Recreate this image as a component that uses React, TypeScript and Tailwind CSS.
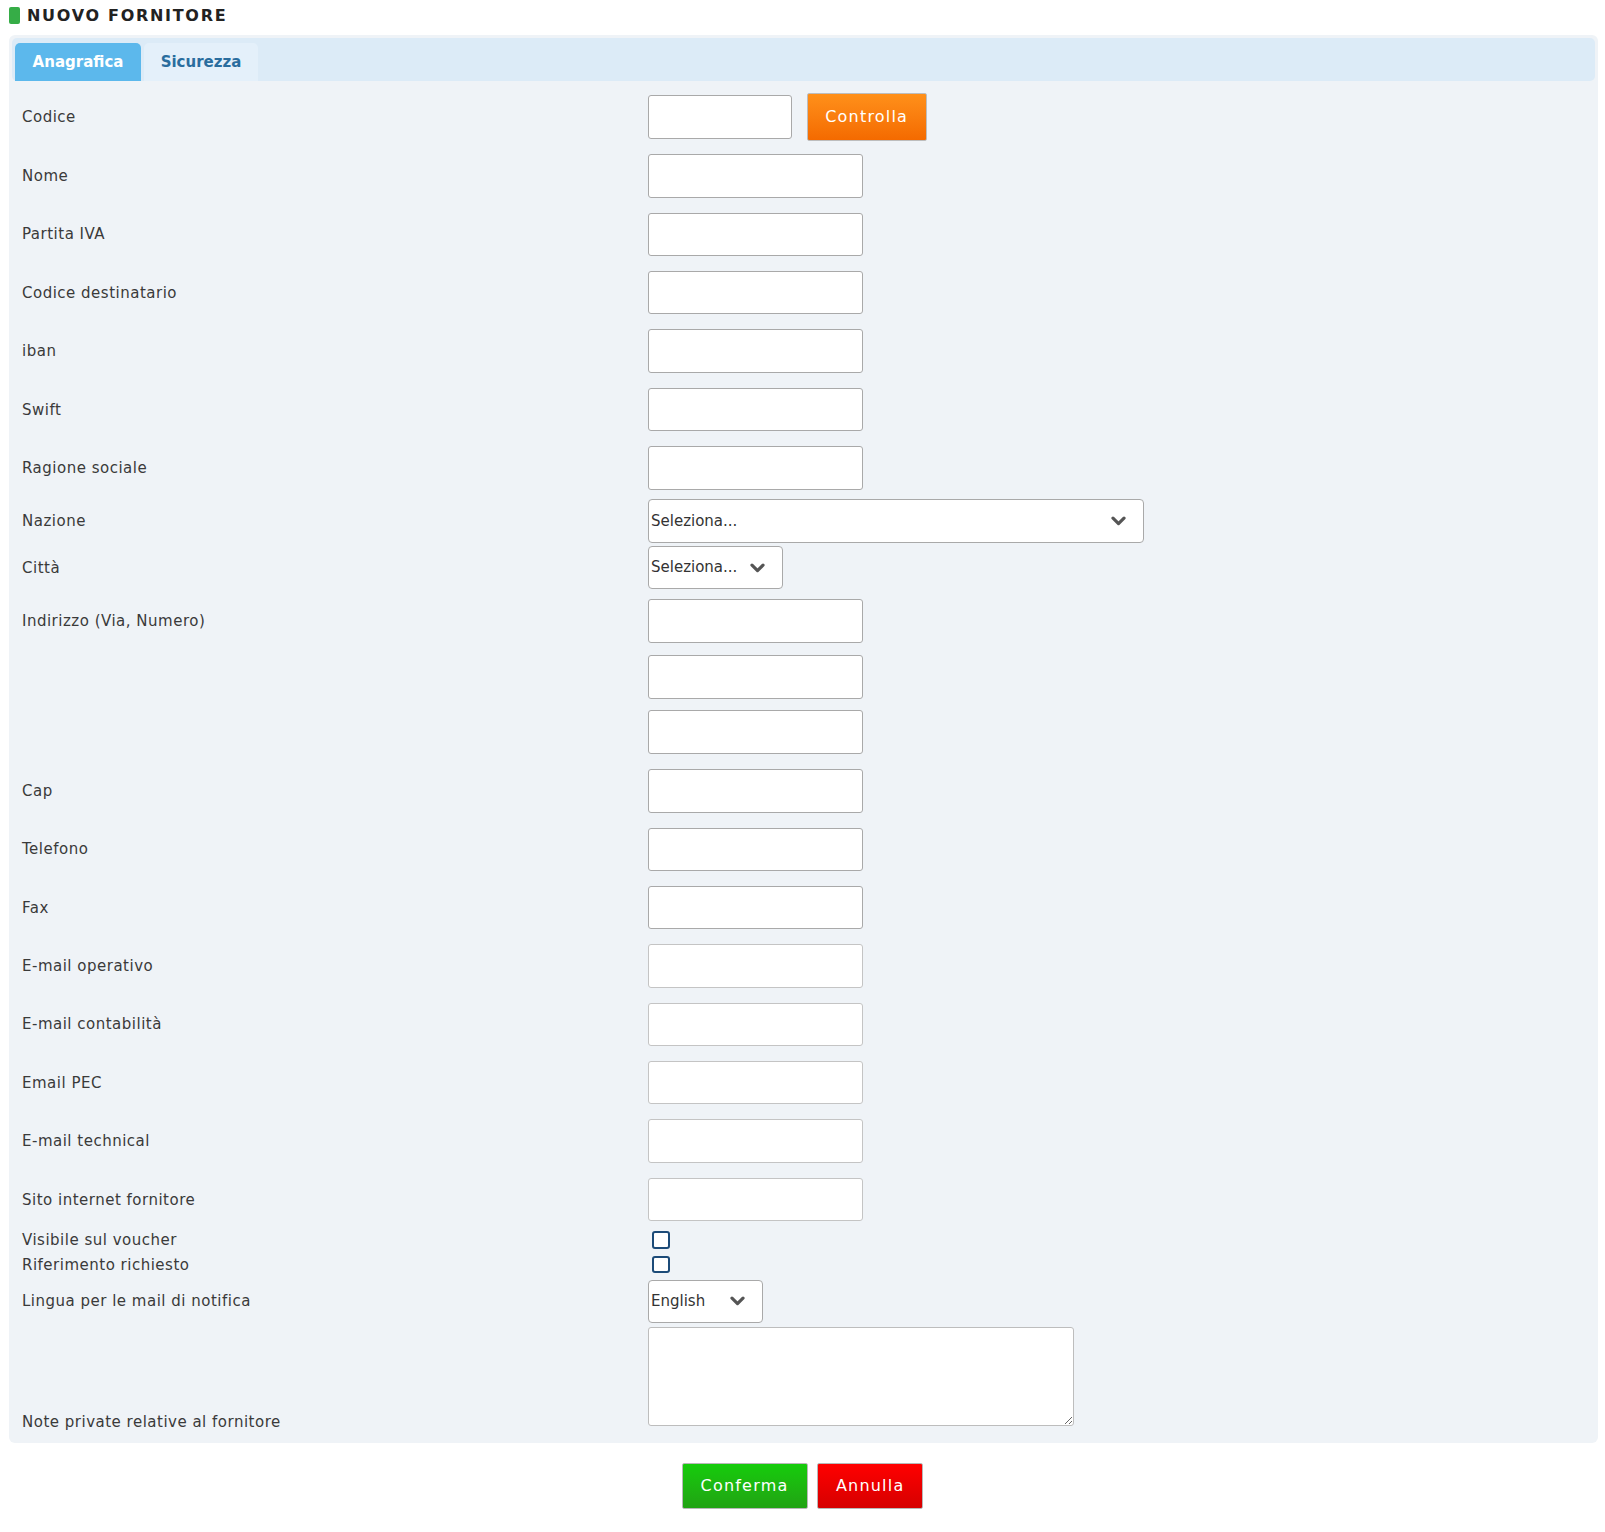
import React from "react";

function Label({ text }: { text?: string }) {
  return (
    <div className="w-[626px] shrink-0 text-[15px] leading-[20px] tracking-[0.5px] text-[#3a3a3a]">
      {text}
    </div>
  );
}

function Chevron() {
  return (
    <svg width="15" height="10" viewBox="0 0 15 10" className="shrink-0">
      <polyline
        points="2,2.2 7.5,7.6 13,2.2"
        fill="none"
        stroke="#555555"
        strokeWidth="3.2"
        strokeLinecap="round"
        strokeLinejoin="round"
      />
    </svg>
  );
}

function TextInput({ light = false }: { light?: boolean }) {
  return (
    <div
      className={
        light
          ? "h-[43.4px] w-[215px] rounded-[3px] border border-[#c4c4c4] bg-white"
          : "h-[43.4px] w-[215px] rounded-[3px] border border-[#a9a9a9] bg-white"
      }
    />
  );
}

function Select({ text, w }: { text: string; w: string }) {
  return (
    <div
      className={`flex h-[43.4px] ${w} items-center justify-between rounded-[4px] border border-[#a9a9a9] bg-white pl-[2px] pr-[17px] text-[15px] text-[#333333]`}
    >
      <span>{text}</span>
      <Chevron />
    </div>
  );
}

function InputRow({
  label,
  mt,
  light = false,
}: {
  label?: string;
  mt: string;
  light?: boolean;
}) {
  return (
    <div className={`flex items-center ${mt}`}>
      <Label text={label} />
      <TextInput light={light} />
    </div>
  );
}

export default function App() {
  return (
    <div className="min-h-[1532px] w-full bg-white font-['DejaVu_Sans',sans-serif] text-[#333333]">
      {/* header */}
      <div className="flex items-center pl-[9px] pt-[7px]">
        <div className="h-[17px] w-[11px] rounded-[2px] bg-[#36ad47]" />
        <div className="ml-[7px] text-[16px] font-semibold leading-[17px] tracking-[1.7px] text-[#222222]">
          NUOVO FORNITORE
        </div>
      </div>

      {/* panel */}
      <div className="ml-[9px] mr-[7px] mt-[11px] rounded-[6px] bg-[#eff3f7] px-[3px] pb-[17.3px] pt-[3px]">
        {/* tab bar */}
        <div className="flex h-[43px] items-end gap-[3px] rounded-[5px] bg-[#dcebf7] pl-[3px]">
          <div className="flex h-[38px] w-[126px] items-center justify-center rounded-t-[5px] bg-[#5cb8ec] text-[15px] font-bold text-white">
            Anagrafica
          </div>
          <div className="flex h-[38px] w-[114px] items-center justify-center rounded-t-[5px] bg-[#e4f0fa] text-[15px] font-bold text-[#2a6d9e]">
            Sicurezza
          </div>
        </div>

        {/* form */}
        <div className="pl-[10px]">
          {/* Codice */}
          <div className="mt-[12.3px] flex items-center">
            <Label text="Codice" />
            <div className="flex items-center gap-[14.7px]">
              <div className="h-[43.7px] w-[144px] rounded-[3px] border border-[#a9a9a9] bg-white" />
              <div className="flex h-[47.4px] w-[120px] items-center justify-center rounded-[2px] border border-[#bdbdbd] bg-linear-to-b from-[#ff9019] to-[#f46a00] text-[16px] tracking-[1.2px] text-white">
                Controlla
              </div>
            </div>
          </div>

          <InputRow label="Nome" mt="mt-[13.6px]" />
          <InputRow label="Partita IVA" mt="mt-[15px]" />
          <InputRow label="Codice destinatario" mt="mt-[15px]" />
          <InputRow label="iban" mt="mt-[15px]" />
          <InputRow label="Swift" mt="mt-[15px]" />
          <InputRow label="Ragione sociale" mt="mt-[15px]" />

          {/* Nazione */}
          <div className="mt-[9.6px] flex items-center">
            <Label text="Nazione" />
            <Select text="Seleziona..." w="w-[495.6px]" />
          </div>

          {/* Città */}
          <div className="mt-[3.3px] flex items-center">
            <Label text="Città" />
            <Select text="Seleziona..." w="w-[134.5px]" />
          </div>

          <InputRow label="Indirizzo (Via, Numero)" mt="mt-[9.9px]" />
          <InputRow mt="mt-[12.6px]" />
          <InputRow mt="mt-[11.6px]" />

          <InputRow label="Cap" mt="mt-[15.6px]" />
          <InputRow label="Telefono" mt="mt-[15px]" />
          <InputRow label="Fax" mt="mt-[15px]" />
          <InputRow label="E-mail operativo" mt="mt-[15px]" light />
          <InputRow label="E-mail contabilità" mt="mt-[15px]" light />
          <InputRow label="Email PEC" mt="mt-[15px]" light />
          <InputRow label="E-mail technical" mt="mt-[15px]" light />
          <InputRow label="Sito internet fornitore" mt="mt-[15px]" light />

          {/* checkboxes */}
          <div className="mt-[6.85px] flex h-[24.3px] items-center">
            <Label text="Visibile sul voucher" />
            <div className="ml-[4.3px] h-[17.6px] w-[17.6px] rounded-[3px] border-2 border-[#1c4b78] bg-white" />
          </div>
          <div className="flex h-[24.3px] items-center">
            <Label text="Riferimento richiesto" />
            <div className="ml-[4.3px] h-[17.6px] w-[17.6px] rounded-[3px] border-2 border-[#1c4b78] bg-white" />
          </div>

          {/* Lingua */}
          <div className="mt-[3.05px] flex items-center">
            <Label text="Lingua per le mail di notifica" />
            <Select text="English" w="w-[115.3px]" />
          </div>

          {/* Note */}
          <div className="mt-[3.9px] flex items-end">
            <div className="mb-[-6px]">
              <Label text="Note private relative al fornitore" />
            </div>
            <textarea className="block h-[98.7px] w-[426px] resize rounded-[3px] border border-[#bdbdbd] bg-white outline-none" />
          </div>
        </div>
      </div>

      {/* buttons */}
      <div className="mt-[19.7px] flex justify-center gap-[9.4px]">
        <div className="flex h-[46.3px] w-[126px] items-center justify-center rounded-[2px] border border-[#b8b8b8] bg-linear-to-b from-[#15cc0b] to-[#20a313] text-[16px] tracking-[1.2px] text-white">
          Conferma
        </div>
        <div className="flex h-[46.3px] w-[106.6px] items-center justify-center rounded-[2px] border border-[#b8b8b8] bg-linear-to-b from-[#ff0000] to-[#d60000] text-[16px] tracking-[1.2px] text-white">
          Annulla
        </div>
      </div>
    </div>
  );
}
